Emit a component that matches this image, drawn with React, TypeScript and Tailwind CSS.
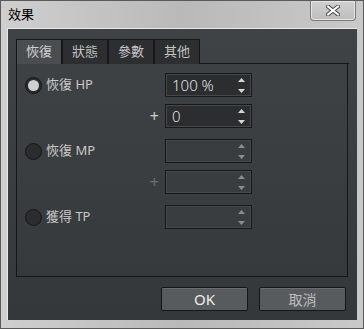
import React from "react";

const cjk = { fontFamily: '"Noto Sans", "Noto Sans CJK TC", sans-serif' };

const Spin: React.FC<{ value?: string; disabled?: boolean }> = ({ value, disabled = false }) => (
    <div
        className={`flex h-[24px] w-[87px] items-center border border-[#17181a] ${
            disabled ? "bg-[#3a3d3f]" : "bg-[#2b2d2f]"
        } shadow-[inset_0_0_0_1px_#45484a]`}
    >
        <span className="flex-1 pl-[6px] text-[15px] font-light leading-none text-[#e2e2e2]">{value}</span>
        <div className="mr-[6px] flex flex-col items-center gap-[7px]">
            <svg width="7" height="4" viewBox="0 0 7 4">
                <path d="M0 4 L3.5 0 L7 4 Z" fill={disabled ? "#8a8d8f" : "#d6d6d6"} />
            </svg>
            <svg width="7" height="4" viewBox="0 0 7 4">
                <path d="M0 0 L7 0 L3.5 4 Z" fill={disabled ? "#8a8d8f" : "#d6d6d6"} />
            </svg>
        </div>
    </div>
);

const Radio: React.FC<{ label: string; checked?: boolean }> = ({ label, checked = false }) => (
    <div className="flex items-center gap-[4px]">
        <div className="flex h-[17px] w-[17px] items-center justify-center rounded-full border border-[#151617] bg-[#2a2c2e]">
            {checked && <div className="h-[11px] w-[11px] rounded-full bg-[#cfd0d1]" />}
        </div>
        <span className="text-[13px] text-[#c9c9c9]">{label}</span>
    </div>
);

const Plus: React.FC<{ dim?: boolean }> = ({ dim = false }) => (
    <div className={`flex justify-end pr-[6px] text-[16px] ${dim ? "text-[#6d7072]" : "text-[#cfcfcf]"}`}>+</div>
);

export default function App() {
    const tabs = ["恢復", "狀態", "參數", "其他"];

    return (
        <div
            className="relative h-[329px] w-[364px] border border-[#5a5a5a] bg-gradient-to-r from-[#cfcfcf] via-[#b9b9b9] to-[#c9c9c9]"
            style={cjk}
        >
            {/* title bar */}
            <div className="flex h-[27px] items-center pl-[7px] text-[13px] text-black">效果</div>
            <div className="absolute right-[7px] top-0 flex h-[20px] w-[46px] items-center justify-center rounded-b-[4px] border border-t-0 border-[#7a7a7a] bg-gradient-to-b from-[#d0d0d0] to-[#bdbdbd] shadow-[inset_0_0_0_1px_#e6e6e6]">
                <svg width="14" height="11" viewBox="0 0 14 11">
                    <path d="M2 1.5 L12 9.5 M12 1.5 L2 9.5" stroke="#444" strokeWidth="4" strokeLinecap="square" />
                    <path d="M2 1.5 L12 9.5 M12 1.5 L2 9.5" stroke="#fff" strokeWidth="2" strokeLinecap="square" />
                </svg>
            </div>

            {/* client */}
            <div className="mx-[6px] flex h-[292px] flex-col border-l border-t border-[#e8e8e8] bg-gradient-to-b from-[#404345] to-[#35383a] px-[8px] pt-[10px]">
                {/* tabs */}
                <div className="flex h-[25px] items-end">
                    {tabs.map((t, i) => (
                        <div
                            key={t}
                            className={`flex h-[25px] w-[46px] items-center justify-center border border-b-0 border-[#151617] text-[13px] ${
                                i === 0 ? "bg-[#4a4d4f] text-[#d2d2d2]" : "bg-[#2c2e30] text-[#c4c4c4]"
                            }`}
                        >
                            {t}
                        </div>
                    ))}
                    <div className="h-[25px] flex-1 border-b border-[#151617]" />
                </div>

                {/* panel */}
                <div className="flex h-[213px] w-[332px] flex-col border border-t-0 border-[#151617] pl-[8px] pt-[9px]">
                    <div className="grid grid-cols-[140px_87px] items-center">
                        <Radio label="恢復 HP" checked />
                        <Spin value="100 %" />
                    </div>
                    <div className="mt-[7px] grid grid-cols-[140px_87px] items-center">
                        <Plus />
                        <Spin value="0" />
                    </div>
                    <div className="mt-[11px] grid grid-cols-[140px_87px] items-center">
                        <Radio label="恢復 MP" />
                        <Spin disabled />
                    </div>
                    <div className="mt-[7px] grid grid-cols-[140px_87px] items-center">
                        <Plus dim />
                        <Spin disabled />
                    </div>
                    <div className="mt-[11px] grid grid-cols-[140px_87px] items-center">
                        <Radio label="獲得 TP" />
                        <Spin disabled />
                    </div>
                </div>

                {/* buttons */}
                <div className="mt-[10px] flex gap-[11px] pl-[145px]">
                    <button className="h-[24px] w-[87px] rounded-[2px] border border-[#151617] bg-[#575b5d] text-[15px] text-[#ececec] shadow-[inset_0_1px_0_#6a6e70]">
                        OK
                    </button>
                    <button className="h-[24px] w-[87px] rounded-[2px] border border-[#151617] bg-[#575b5d] text-[14px] text-[#bdbdbd] shadow-[inset_0_1px_0_#6a6e70]">
                        取消
                    </button>
                </div>
            </div>
        </div>
    );
}
